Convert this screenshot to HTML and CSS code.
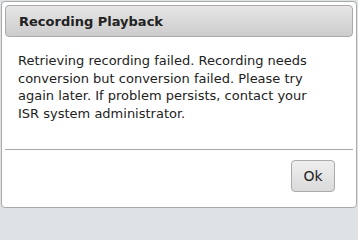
FILE: index.html
```html
<!DOCTYPE html>
<html>
<head>
<meta charset="utf-8">
<link rel="stylesheet" href="styles.css">
</head>
<body>
<div class="dialog">
  <div class="titlebar"><span class="title">Recording Playback</span></div>
  <div class="content">
    <p class="message">Retrieving recording failed. Recording needs conversion but conversion failed. Please try again later. If problem persists, contact your ISR system administrator.</p>
  </div>
  <div class="buttonpane">
    <button class="btn" type="button">Ok</button>
  </div>
</div>
</body>
</html>
```
FILE: styles.css
```css
html, body {
  margin: 0;
  padding: 0;
}
body {
  background: #dfe2e5;
  width: 358px;
  height: 210px;
  overflow: hidden;
  font-family: "DejaVu Sans", Verdana, sans-serif;
}
.dialog {
  margin: 1px 1px 0 1px;
  width: 348px;
  height: 199px;
  padding: 3px;
  background: #fff;
  border: 1px solid #aaaaaa;
  border-radius: 4px;
  display: flex;
  flex-direction: column;
}
.titlebar {
  height: 30px;
  border: 1px solid #aaaaaa;
  border-radius: 4px;
  background: linear-gradient(#e6e6e6, #cccccc);
  display: flex;
  align-items: center;
  padding: 0 13px;
}
.title {
  font-weight: bold;
  font-size: 13px;
  color: #222;
}
.content {
  padding: 15px 22px 0 13px;
  flex: 1;
}
.message {
  margin: 0;
  font-size: 13px;
  line-height: 17.5px;
  color: #222;
}
.buttonpane {
  border-top: 1px solid #aaaaaa;
  height: 55px;
  display: flex;
  justify-content: flex-end;
  align-items: flex-start;
  padding: 10px 18px 0 0;
  box-sizing: border-box;
}
.btn {
  width: 44px;
  height: 32px;
  border: 1px solid #aaaaaa;
  border-radius: 4px;
  background: linear-gradient(#efefef, #dadada);
  font-family: "DejaVu Sans", Verdana, sans-serif;
  font-size: 14px;
  color: #222;
  padding: 0;
}
```
